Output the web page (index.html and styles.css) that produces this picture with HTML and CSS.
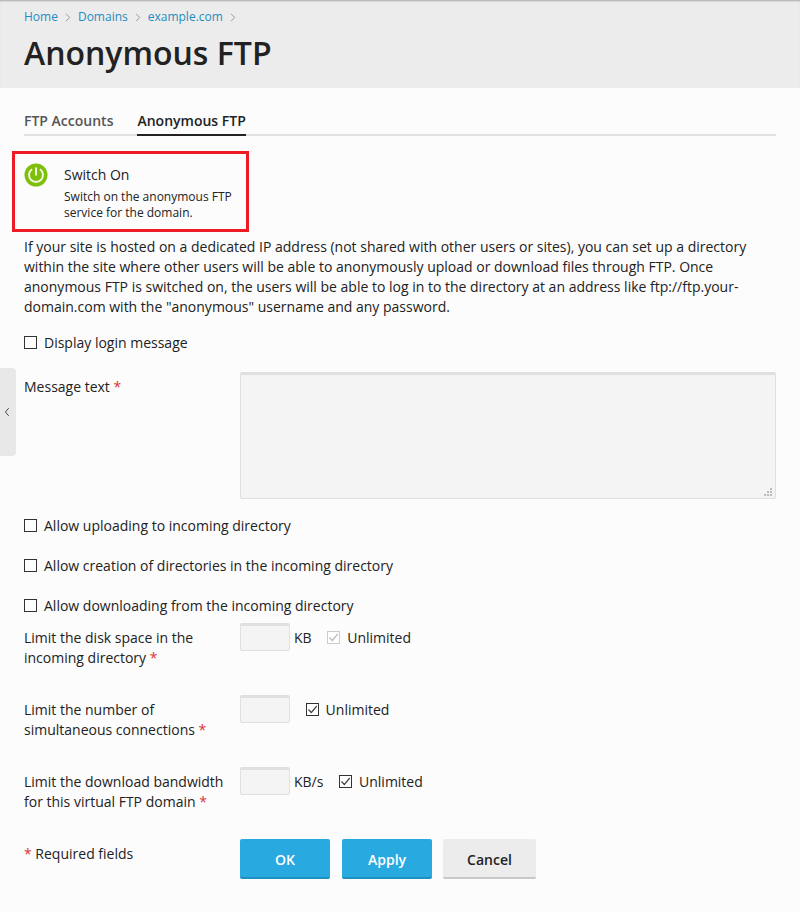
FILE: index.html
```html
<!DOCTYPE html>
<html lang="en">
<head>
    <meta charset="UTF-8">
    <meta name="viewport" content="width=device-width, initial-scale=1.0">
    <title>Anonymous FTP</title>
    <link rel="stylesheet" href="styles.css">
</head>
<body>
    <div class="header">
        <div class="breadcrumbs">
            <a href="#">Home</a>
            <svg class="crumb-arrow" width="6" height="9" viewBox="0 0 6 9"><path d="M1 .8 4.7 4.5 1 8.2"/></svg>
            <a href="#">Domains</a>
            <svg class="crumb-arrow" width="6" height="9" viewBox="0 0 6 9"><path d="M1 .8 4.7 4.5 1 8.2"/></svg>
            <a href="#">example.com</a>
            <svg class="crumb-arrow" width="6" height="9" viewBox="0 0 6 9"><path d="M1 .8 4.7 4.5 1 8.2"/></svg>
        </div>
        <h1>Anonymous FTP</h1>
    </div>
    <a href="#" class="side-toggle">
        <svg width="6" height="10" viewBox="0 0 6 10"><path d="M4.7 1.2 1.4 5 4.7 8.8"/></svg>
    </a>
    <div class="content">
        <div class="tabs">
            <a href="#" class="tab">FTP Accounts</a>
            <a href="#" class="tab active">Anonymous FTP</a>
        </div>
        <div class="switch-box">
            <svg class="switch-icon" width="24" height="24" viewBox="0 0 24 24">
                <circle cx="12" cy="12" r="11.5" fill="#7ebf0b"/>
                <path d="M8 6.3a7 7 0 1 0 8 0" fill="none" stroke="#f1f9dd" stroke-width="2"/>
                <path d="M12 4.5v8" fill="none" stroke="#f1f9dd" stroke-width="2"/>
            </svg>
            <div class="switch-info">
                <h3>Switch On</h3>
                <p>Switch on the anonymous FTP service for the domain.</p>
            </div>
        </div>
        <p class="intro">If your site is hosted on a dedicated IP address (not shared with other users or sites), you can set up a directory within the site where other users will be able to anonymously upload or download files through FTP. Once anonymous FTP is switched on, the users will be able to log in to the directory at an address like ftp://ftp.your-domain.com with the "anonymous" username and any password.</p>

        <label class="check-row first"><span class="check"></span>Display login message</label>

        <div class="form-row message-row">
            <div class="field-label">Message text <span class="req">*</span></div>
            <div class="textarea">
                <svg class="grip" width="8" height="8" viewBox="0 0 8 8"><path d="M6 0h2v2H6zM3 3h2v2H3zM6 3h2v2H6zM0 6h2v2H0zM3 6h2v2H3zM6 6h2v2H6z"/></svg>
            </div>
        </div>

        <label class="check-row after-message"><span class="check"></span>Allow uploading to incoming directory</label>
        <label class="check-row"><span class="check"></span>Allow creation of directories in the incoming directory</label>
        <label class="check-row"><span class="check"></span>Allow downloading from the incoming directory</label>

        <div class="limits">
            <div class="form-row limit-row">
                <div class="field-label">Limit the disk space in the incoming directory <span class="req">*</span></div>
                <div class="input"></div>
                <span class="unit">KB</span>
                <label class="unlimited disabled"><span class="check checked"><svg width="11" height="11" viewBox="0 0 11 11"><path d="M1.5 5.5 4.3 8.5 9.8 2"/></svg></span>Unlimited</label>
            </div>
            <div class="form-row limit-row">
                <div class="field-label">Limit the number of simultaneous connections <span class="req">*</span></div>
                <div class="input"></div>
                <label class="unlimited"><span class="check checked"><svg width="11" height="11" viewBox="0 0 11 11"><path d="M1.5 5.5 4.3 8.5 9.8 2"/></svg></span>Unlimited</label>
            </div>
            <div class="form-row limit-row">
                <div class="field-label">Limit the download bandwidth for this virtual FTP domain <span class="req">*</span></div>
                <div class="input"></div>
                <span class="unit">KB/s</span>
                <label class="unlimited"><span class="check checked"><svg width="11" height="11" viewBox="0 0 11 11"><path d="M1.5 5.5 4.3 8.5 9.8 2"/></svg></span>Unlimited</label>
            </div>
        </div>

        <div class="form-row buttons-row">
            <div class="field-label"><span class="req">*</span> Required fields</div>
            <button class="btn primary">OK</button>
            <button class="btn primary">Apply</button>
            <button class="btn">Cancel</button>
        </div>
    </div>
</body>
</html>
```

FILE: styles.css
```css
html, body {
    height: 100%;
}
body {
    margin: 0;
    position: relative;
    overflow: hidden;
    font-family: "Open Sans", sans-serif;
    font-size: 14px;
    line-height: 20px;
    background-color: #fcfcfc;
    color: #222;
}
.header {
    height: 88px;
    box-sizing: border-box;
    padding: 7px 24px 0;
    background-color: #ececec;
    box-shadow: inset 0 2px 2px -1px #aaa;
}
.breadcrumbs {
    display: flex;
    align-items: center;
    gap: 7px;
    font-size: 12px;
    line-height: 20px;
}
.breadcrumbs a {
    color: #1f8dbf;
    text-decoration: none;
}
.crumb-arrow path {
    fill: none;
    stroke: #999;
}
.header h1 {
    margin: 4px 0 0;
    font-size: 32px;
    line-height: 44px;
    font-weight: 600;
    color: #222;
}
.side-toggle {
    position: absolute;
    top: 368px;
    left: 0;
    width: 16px;
    height: 88px;
    display: flex;
    align-items: center;
    justify-content: center;
    background-color: #e8e8e8;
    border-radius: 0 4px 4px 0;
}
.side-toggle svg {
    margin-right: 2px;
}
.side-toggle path {
    fill: none;
    stroke: #444;
}
.content {
    padding: 0 24px;
}
.tabs {
    display: flex;
    gap: 24px;
    margin-top: 23px;
    border-bottom: 2px solid #e0e0e0;
}
.tab {
    margin-bottom: -2px;
    padding-bottom: 3px;
    border-bottom: 2px solid transparent;
    font-weight: 600;
    color: #555;
    text-decoration: none;
}
.tab.active {
    color: #222;
    border-bottom-color: #222;
}
.switch-box {
    display: flex;
    width: 237px;
    height: 81px;
    box-sizing: border-box;
    margin: 15px 0 0 -12px;
    padding: 9px 9px;
    border: 3px solid #ed1c24;
}
.switch-icon {
    flex: none;
    margin-right: 16px;
}
.switch-info h3 {
    margin: 1px 0 0;
    font-size: 14px;
    line-height: 22px;
    font-weight: 400;
}
.switch-info p {
    margin: 3px 0 0;
    font-size: 12px;
    line-height: 16px;
}
.intro {
    margin: 5px 0 0;
}
.check-row {
    display: flex;
    align-items: center;
    height: 20px;
    margin-top: 20px;
}
.check-row.first {
    margin-top: 16px;
}
.check-row.after-message {
    margin-top: 17px;
}
.check {
    flex: none;
    width: 13px;
    height: 13px;
    box-sizing: border-box;
    margin-right: 7px;
    border: 1px solid #333;
    display: flex;
    align-items: center;
    justify-content: center;
    background-color: #fff;
    margin-top: -1px;
}
.check svg {
    flex: none;
    fill: none;
    stroke: #444;
    stroke-width: 1.2;
}
.form-row {
    display: flex;
    align-items: flex-start;
}
.field-label {
    flex: none;
    width: 216px;
    box-sizing: border-box;
    padding-right: 10px;
}
.req {
    color: #d33;
}
.message-row {
    margin-top: 19px;
}
.message-row .field-label {
    padding-top: 5px;
}
.textarea {
    position: relative;
    flex: 1;
    height: 127px;
    box-sizing: border-box;
    background-color: #f4f4f4;
    border: 1px solid #e0e0e0;
    border-top-width: 3px;
    border-radius: 2px;
}
.grip {
    position: absolute;
    right: 3px;
    bottom: 2px;
    fill: #bbb;
}
.limits {
    margin-top: 7px;
}
.limit-row {
    height: 72px;
}
.limit-row .field-label {
    padding-top: 5px;
}
.input {
    flex: none;
    width: 50px;
    height: 28px;
    box-sizing: border-box;
    background-color: #f4f4f4;
    border: 1px solid #e0e0e0;
    border-top-width: 3px;
    border-radius: 2px;
}
.unit {
    margin: 5px 0 0 4px;
}
.unlimited {
    display: flex;
    align-items: center;
    height: 20px;
    margin: 5px 0 0 15.6px;
}
.unlimited.disabled .check {
    border-color: #ccc;
}
.unlimited.disabled .check svg {
    stroke: #bbb;
}
.buttons-row .field-label {
    padding-top: 5px;
}
.btn {
    width: 90px;
    height: 40px;
    margin-right: 12px;
    padding: 2px 0 0;
    border: none;
    border-bottom: 2px solid #c8c8c8;
    border-radius: 2px;
    background-color: #ececec;
    font-family: inherit;
    font-size: 14px;
    font-weight: 600;
    color: #222;
}
.btn.primary {
    background-color: #28a9e0;
    border-bottom-color: #1f8fc0;
    color: #fff;
}
.btn.primary + .btn.primary {
    margin-right: 11px;
}
.btn:last-child {
    width: 93px;
    margin-right: 0;
}
```
